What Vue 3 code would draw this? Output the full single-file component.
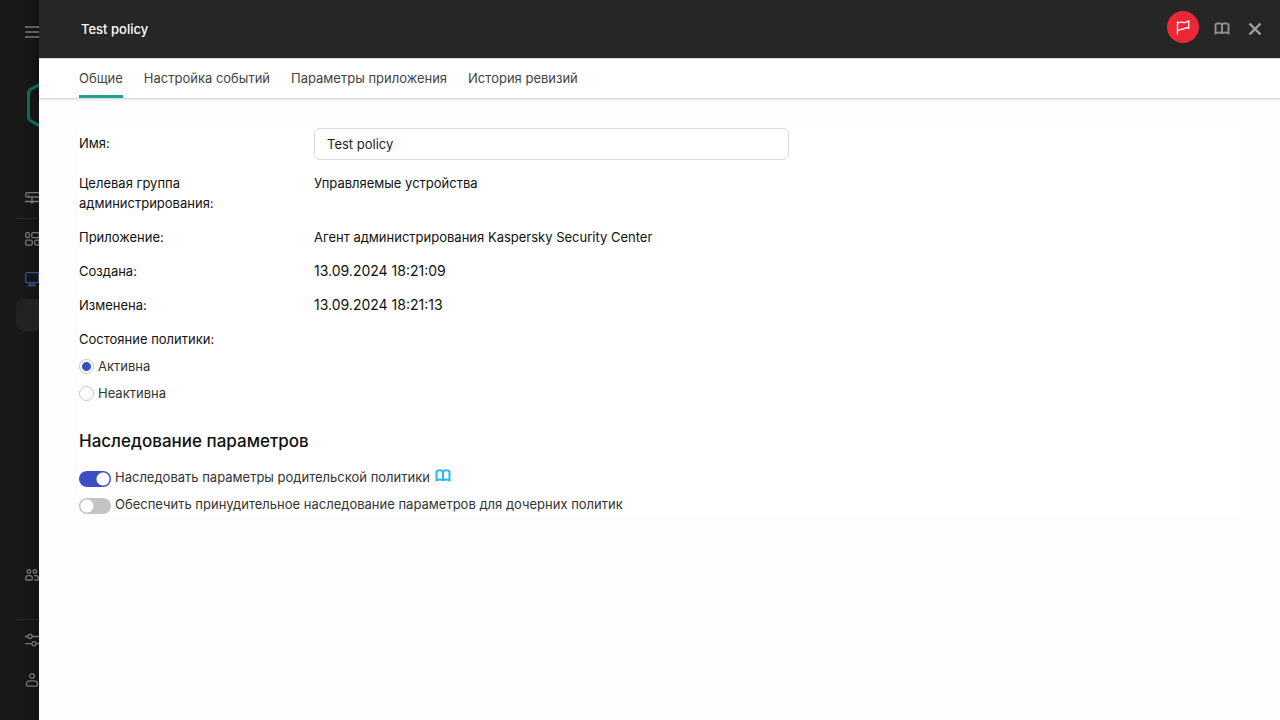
<script setup>
import { ref } from 'vue'

const name = ref('Test policy')
const status = ref('active')
const inherit = ref(true)
const force = ref(false)
const tabs = ['Общие', 'Настройка событий', 'Параметры приложения', 'История ревизий']
const current = ref('Общие')
const details = [
  { label: 'Целевая группа администрирования:', value: 'Управляемые устройства' },
  { label: 'Приложение:', value: 'Агент администрирования Kaspersky Security Center' },
  { label: 'Создана:', value: '13.09.2024 18:21:09', date: true },
  { label: 'Изменена:', value: '13.09.2024 18:21:13', date: true },
]
</script>

<template>
  <div class="page">
    <nav class="side" aria-label="Главное меню">
      <button class="item burger" aria-label="Меню">
        <svg width="16" height="16" viewBox="0 0 16 16"><path d="M0 3h16M0 8h16M0 13h16" stroke-width="1.6" /></svg>
      </button>
      <svg class="logo" width="46" height="50" viewBox="0 0 46 50"><path d="M21 -.500 4 8Q1.500 9.500 1.500 12.500V35.500Q1.500 38.500 4 40L21 49.500Q23 50.500 25 49.500L42 40Q44.500 38.500 44.500 35.500V12.500Q44.500 9.500 42 8L25 -.500Q23 -1.500 21 -.500Z" /></svg>
      <button class="item server" aria-label="Сервер">
        <svg width="16" height="16" viewBox="0 0 16 16"><rect x=".7" y="2.700" width="14.600" height="4.300" rx="1.500" /><path d="M3 4.900h1M7 7.500v5M0 11.500h16M5.500 12.500h3" /></svg>
      </button>
      <hr>
      <button class="item dash" aria-label="Мониторинг">
        <svg width="16" height="16" viewBox="0 0 16 16"><rect x=".7" y="1.700" width="3.600" height="5" rx="1.400" /><rect x="6.700" y="1.700" width="7.600" height="5" rx="1.400" /><rect x=".7" y="9.200" width="6.600" height="5" rx="1.400" /><rect x="9.700" y="9.200" width="4.600" height="5" rx="1.400" /></svg>
      </button>
      <button class="item active" aria-label="Активы">
        <svg width="16" height="16" viewBox="0 0 16 16"><rect x=".7" y="1.700" width="13" height="10" rx="1.500" /><path d="M5.500 12v2.500M8.500 12v2.500M3 14.500h8" /></svg>
      </button>
      <div class="selected"></div>
      <button class="item users" aria-label="Пользователи">
        <svg width="16" height="16" viewBox="0 0 16 16"><circle cx="4" cy="4.500" r="1.800" /><circle cx="9.800" cy="4.500" r="1.800" /><path d="M.7 12.300v-1.300q0-2.300 2.300-2.300h2q2.300 0 2.300 2.300v1.300q0 .7-.7.7H1.400q-.7 0-.7-.7ZM9 8.700h2q2.300 0 2.300 2.300v1.300q0 .7-.7.7H9.500" /></svg>
      </button>
      <hr>
      <button class="item tune" aria-label="Параметры">
        <svg width="16" height="16" viewBox="0 0 16 16"><path d="M0 4.500h3M7 4.500h9M0 11.700h6.500M11 11.700h5" /><circle cx="5" cy="4.500" r="2.100" /><circle cx="9" cy="11.700" r="2.100" /></svg>
      </button>
      <button class="item user" aria-label="Профиль">
        <svg width="16" height="16" viewBox="0 0 16 16"><circle cx="7" cy="4" r="2.300" /><path d="M1.500 13v-1q0-3.200 3.200-3.200h4.600q3.200 0 3.200 3.200v1q0 1.200-1.200 1.200H2.700q-1.200 0-1.200-1.200Z" /></svg>
      </button>
    </nav>

    <section class="panel">
      <header>
        <h1>Test policy</h1>
        <button class="flag" aria-label="Флаг">
          <svg width="16" height="16" viewBox="0 0 16 16"><path d="M2.500 2v13.500M2.500 4.200L6 3.200C8 2.900 8.500 4.300 10.500 3.300L13.700 2V9.300L12.500 8.800C10 8.500 9.500 10.200 7.500 10L2.500 11.500" /></svg>
        </button>
        <button class="help" aria-label="Справка">
          <svg width="16" height="14" viewBox="0 0 16 14"><path d="M8 2.800Q7 1.300 4.700 1.300Q2.500 1.300 1.500 2.500V11.200Q5 9.800 8 11.200Q11 9.800 14.500 11.200V2.500Q13.500 1.300 11.300 1.300Q9 1.300 8 2.800ZM8 2.800V11.200" /></svg>
        </button>
        <button class="close" aria-label="Закрыть">
          <svg width="14" height="14" viewBox="0 0 14 14"><path d="M1.500 1.500l11 11M12.500 1.500l-11 11" /></svg>
        </button>
      </header>
      <div class="tabs" role="tablist">
        <button v-for="t in tabs" :key="t" role="tab" :aria-selected="t === current" :class="{ on: t === current }" @click="current = t">{{ t }}</button>
      </div>
      <main>
        <form @submit.prevent>
          <div class="row">
            <label class="name" for="name">Имя:</label>
            <input id="name" v-model="name" class="field" type="text">
          </div>
          <dl>
            <div v-for="d in details" :key="d.label" class="row">
              <dt>{{ d.label }}</dt>
              <dd :class="{ date: d.date }">{{ d.value }}</dd>
            </div>
          </dl>
          <fieldset>
            <legend>Состояние политики:</legend>
            <label class="choice"><input v-model="status" type="radio" name="status" value="active">Активна</label>
            <label class="choice"><input v-model="status" type="radio" name="status" value="inactive">Неактивна</label>
          </fieldset>
          <h2>Наследование параметров</h2>
          <div class="switches">
            <div class="line">
              <label class="choice"><input v-model="inherit" type="checkbox" role="switch">Наследовать параметры родительской политики</label>
              <a href="#" aria-label="Справка">
                <svg width="16" height="14" viewBox="0 0 16 14"><path d="M8 2.800Q7 1.300 4.700 1.300Q2.500 1.300 1.500 2.500V11.200Q5 9.800 8 11.200Q11 9.800 14.500 11.200V2.500Q13.500 1.300 11.300 1.300Q9 1.300 8 2.800ZM8 2.800V11.200" /></svg>
              </a>
            </div>
            <label class="choice"><input v-model="force" type="checkbox" role="switch">Обеспечить принудительное наследование параметров для дочерних политик</label>
          </div>
        </form>
      </main>
    </section>
  </div>
</template>

<style>
body { margin: 0; background: #fdfdfd; }
</style>

<style scoped>
* { box-sizing: border-box; }
.page {
  display: flex;
  min-height: 100vh;
  font: 13px/20px Inter, "Noto Sans", sans-serif;
  color: #1d1d1f;
}
button { font: inherit; padding: 0; border: 0; background: none; cursor: pointer; }
svg { display: block; fill: none; flex: none; }
.side {
  width: 39px;
  flex: none;
  overflow: hidden;
  display: flex;
  flex-direction: column;
  background: linear-gradient(90deg, #181818 24px, #131313);
}
.item { padding-left: 25px; height: 16px; flex: none; }
.item svg { stroke: #777; stroke-width: 1.3; }
.burger { margin-top: 24px; }
.logo { margin: 41px 0 0 27px; stroke: #14685a; stroke-width: 3; }
.server { margin-top: 59px; }
.side hr { width: 100%; margin: 12px 0 12px 16px; border: 0; border-top: 1px solid #2a2a2a; }
.active { margin-top: 24px; }
.active svg { stroke: #36508f; }
.selected { height: 32px; margin: 12px 0 0 16px; border-radius: 8px 0 0 8px; background: #222; flex: none; }
.users { margin-top: auto; margin-bottom: 24px; }
.user { margin: 24px 0 32px; }
.panel { flex: 1; min-width: 0; display: flex; flex-direction: column; background: #fdfdfd; }
header {
  height: 58px;
  display: flex;
  align-items: center;
  padding: 0 16px 0 42px;
  background: #262626;
}
h1 { flex: 1; margin: 0; font-size: 13px; font-weight: 500; color: #fff; }
.flag {
  width: 32px;
  height: 32px;
  display: grid;
  place-items: center;
  margin: 0 15px 4px 0;
  border-radius: 50%;
  background: #ee2737;
}
.flag svg { stroke: #fff; stroke-width: 1.3; }
.help { margin-right: 18px; }
.help svg { stroke: #8e8e8e; stroke-width: 2; }
.close { padding: 0 2px 0 0; }
.close svg { stroke: #a0a0a0; stroke-width: 2.4; }
.tabs {
  display: flex;
  gap: 21px;
  height: 41px;
  padding: 0 40px;
  background: #fff;
  border-top: 1px solid #d8d8d8;
  border-bottom: 1px solid #dcdcdc;
  box-shadow: 0 1px 2px #0000001a;
}
.tabs button { padding-top: 2px; color: #444; border-bottom: 3px solid transparent; white-space: nowrap; }
.tabs .on { border-color: #23a08b; }
main { padding: 29px 40px; }
form { background: #fff; color: #111; }
.row { display: grid; grid-template-columns: 215px 1fr; column-gap: 20px; }
.name { padding-top: 5px; }
.field {
  width: 100%;
  max-width: 475px;
  height: 32px;
  padding: 0 12px;
  border: 1px solid #d5d9de;
  border-radius: 6px;
  background: #fff;
  font: inherit;
  color: #1d1d1d;
}
dl { display: grid; gap: 14px; margin: 13px 0 14px; }
dt { max-width: 150px; }
dd { margin: 0; }
.date { font-size: 14px; }
fieldset { margin: 0; padding: 0; border: 0; }
legend { padding: 0; margin-bottom: 7px; }
.choice { display: flex; gap: 4px; width: fit-content; color: #333; }
.choice + .choice { margin-top: 7px; }
input[type="radio"] {
  appearance: none;
  width: 15px;
  height: 15px;
  margin: 3px 0 0;
  border: 1px solid #c4c4cc;
  border-radius: 50%;
  background: #fff;
}
input[type="radio"]:checked { background: radial-gradient(circle, #3a4fc1 4px, #fff 5px); }
h2 { margin: 26px 0 14px; font-size: 17px; line-height: 24px; font-weight: 500; color: #111; }
.switches { display: grid; gap: 7px; padding-bottom: 1px; }
.line { display: flex; gap: 5px; }
input[type="checkbox"] {
  appearance: none;
  flex: none;
  width: 32px;
  height: 16px;
  margin: 4px 0 0;
  border-radius: 8px;
  background: radial-gradient(circle at 8px 8px, #fff 6px, #c4c4c4 7px);
}
input[type="checkbox"]:checked { background: radial-gradient(circle at 24px 8px, #fff 6px, #3a4fc1 7px); }
.line a { padding-top: 2px; }
.line a svg { stroke: #29b6f6; stroke-width: 2; }
</style>
